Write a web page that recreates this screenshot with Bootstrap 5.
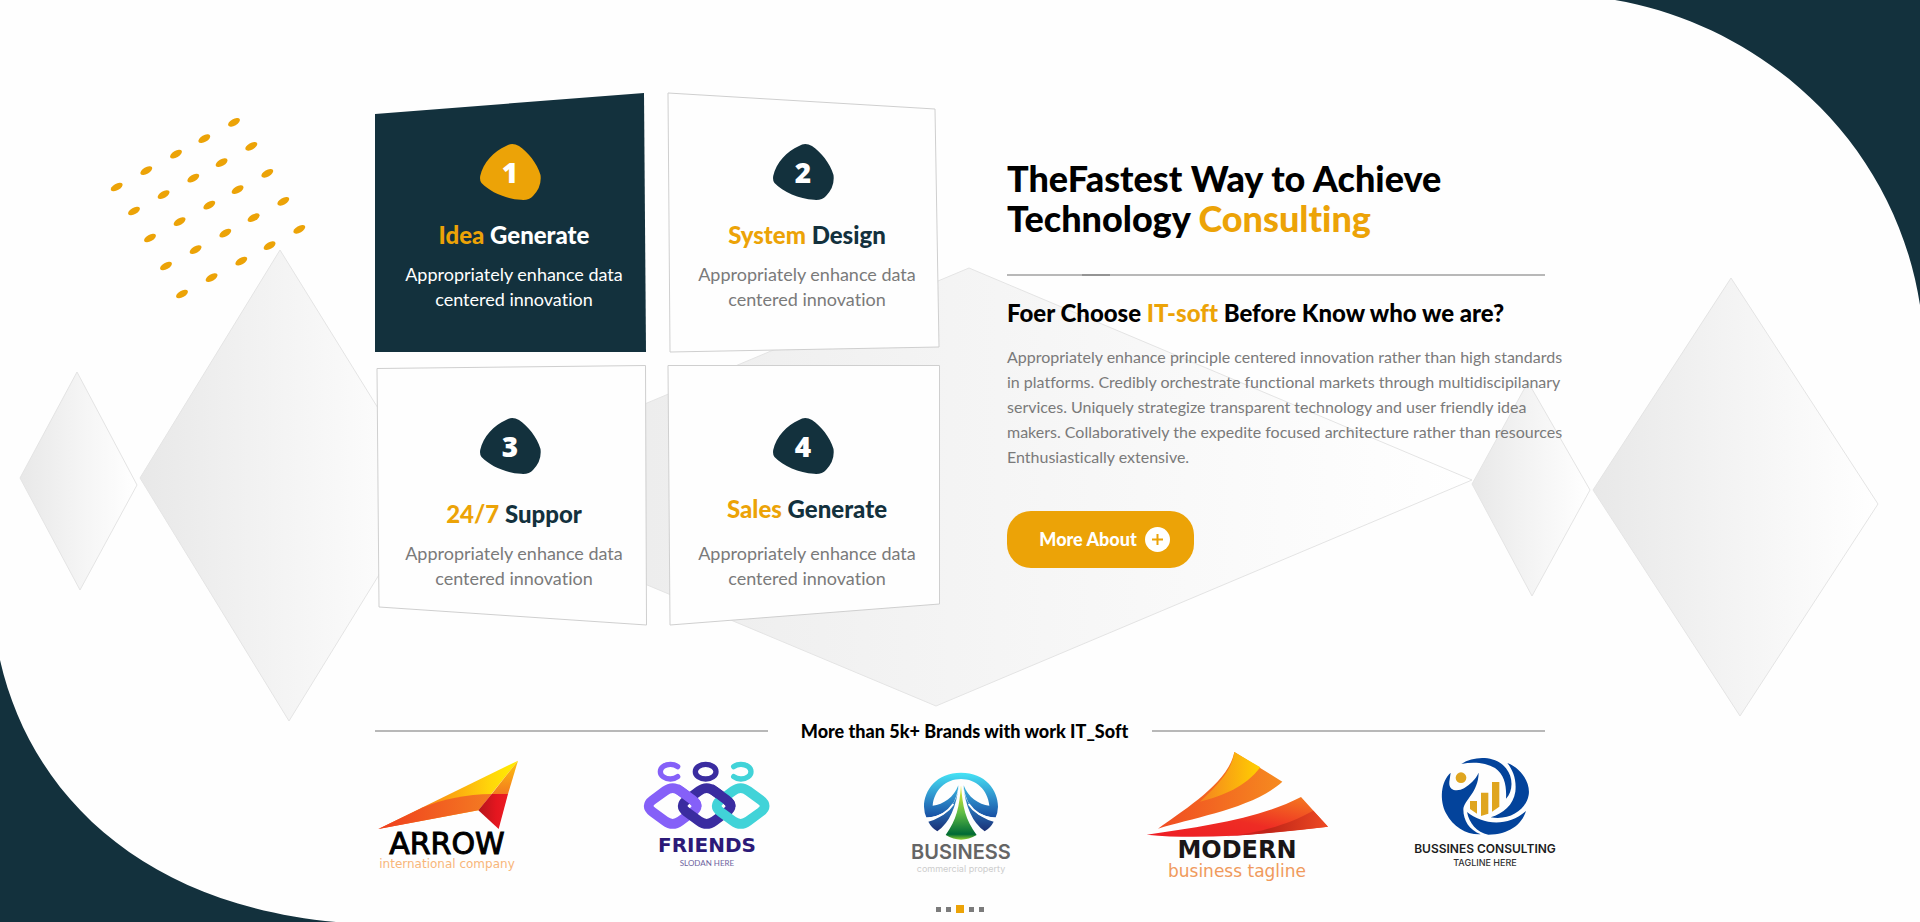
<!DOCTYPE html>
<html lang="en">
<head>
<meta charset="utf-8">
<meta name="viewport" content="width=device-width, initial-scale=1">
<title>IT-soft Technology Consulting</title>
<link rel="stylesheet" href="https://cdn.jsdelivr.net/npm/bootstrap@5.3.0/dist/css/bootstrap.min.css">
<style>
:root{--ink:#13313d;--gold:#eca307;--muted:#7a7a7a}
body{font-family:Lato,"Open Sans",sans-serif;font-variant-ligatures:none;color:#000;background:#fefefe}
.page{position:relative;overflow:hidden;padding-top:92px}
.backdrop{position:absolute;inset:0;width:100%;height:100%;z-index:0}
.wrap{max-width:1170px;width:100%;margin:0 auto;position:relative;z-index:1}
.gold{color:var(--gold)}
.steps{display:grid;grid-template-columns:1fr 1fr;grid-template-rows:260px 262px;column-gap:21px;row-gap:13px;padding-right:20px}
.step{position:relative;text-align:center;padding:52px 0 0 6px;color:var(--muted)}
.step .panel{position:absolute;inset:0;width:100%;height:100%;overflow:visible}
.step .panel polygon{fill:#fefefe;stroke:#cfcfcf;stroke-width:1;stroke-linejoin:round}
.step .body{position:relative}
.step.dark .panel polygon{fill:var(--ink);stroke:none}
.step.dark{color:#fff}
.step.dark h3{color:#fff}
.blob{width:61px;height:56px;position:relative;margin:0 auto;left:-4px;display:flex;align-items:center;justify-content:center;color:#fff;font-family:"Open Sans",sans-serif;font-weight:800;font-size:28px;line-height:36px}
.blob svg{position:absolute;inset:0;fill:var(--ink)}
.step.dark .blob svg{fill:var(--gold)}
.blob span{position:relative}
.step h3{font-size:24px;line-height:28px;font-weight:900;color:var(--ink);margin:21px 0 13px}
.step.low{padding-top:53px}
.step.low h3{margin:26px 0 13px}
.step.low h3.raised{margin:21px 0 18px}
.step p{font-size:18px;line-height:25px;margin:0}
.intro{padding:66px 0 0 47px}
.intro h1{font-size:36px;line-height:40px;font-weight:900;margin:0 0 36px}
.rule{height:2px;background:#b8b8b8;border:0;opacity:1;margin:0}
.rule.accent{background:linear-gradient(90deg,#b8b8b8 75px,#949494 75px,#949494 103px,#b8b8b8 103px)}
.intro h2{font-size:24px;line-height:32px;font-weight:900;margin:21px 0 15px}
.intro p{font-size:16px;line-height:25px;color:var(--muted);margin:0 0 42px}
.btn-more{background:var(--gold);color:#fff;border:0;border-radius:24px;height:57px;width:187px;font-weight:900;font-size:18px;padding:0 8px 0 16px}
.btn-more:hover{background:#d99504;color:#fff}
.brands-title{margin-top:92px}
.brands-title h2{font-size:18px;line-height:24px;font-weight:900;margin:0;padding:0 24px 0 33px}
.logos{margin-top:7px;margin-right:-16px}
.logo{margin:0;text-align:center;display:flex;flex-direction:column;align-items:center}
.logo svg{display:block;height:90px;width:100%}
.logo b,.logo small{white-space:nowrap;display:block}
.lg-arrow{width:182px;align-items:flex-start}.lg-arrow svg{width:144px;height:80px}
.lg-arrow b,.lg-arrow small{width:144px;font-family:"DejaVu Sans",sans-serif}
.lg-arrow b{font-size:30px;line-height:27px;font-weight:400;color:#000;-webkit-text-stroke:1px #000}
.lg-arrow small{font-size:12px;line-height:15px;color:#f8b67a}
.lg-friends{width:140px}.lg-friends b{font:700 20px/24px "DejaVu Sans",sans-serif;color:#2c1a78;margin-top:-7px}
.lg-friends small{font-size:8px;line-height:12px;color:#6d64a0}
.lg-business{width:208px}.lg-business b{font:600 20px/24px Inter,sans-serif;color:#656565}
.lg-business small{font:400 9px/10px Inter,sans-serif;color:#cdcdcd}
.lg-modern{width:184px}.lg-modern b{font:700 24px/21px "DejaVu Sans",sans-serif;color:#1a1617}
.lg-modern small{font:400 17px/20px "DejaVu Sans",sans-serif;color:#f09a5c}
.lg-consult{width:152px}.lg-consult b{font:600 12px/18px Inter,sans-serif;color:#1c1c1c}
.lg-consult small{font:500 9px/10px Inter,sans-serif;color:#333}
.pager{position:relative;z-index:1;gap:5px;margin-bottom:9px}
.pager button{width:5px;height:5px;padding:0;border:0;background:#7b7b7b}
.pager button.active{width:8px;height:8px;background:var(--gold)}
</style>
</head>
<body>
<main class="page min-vh-100 d-flex flex-column">
<svg class="backdrop" viewBox="0 0 1920 922" preserveAspectRatio="xMidYMid slice" aria-hidden="true">
<defs>
<linearGradient id="fade"><stop offset="0" stop-color="#e8e8e8"/><stop offset=".5" stop-color="#f4f4f4"/><stop offset="1" stop-color="#fff"/></linearGradient>
<ellipse id="dot" rx="6.6" ry="3.3" transform="rotate(-30)"/>
<g id="dots"><use href="#dot" x="0"/><use href="#dot" transform="translate(29.6 -16.4)"/><use href="#dot" transform="translate(59.3 -32.9)"/><use href="#dot" transform="translate(87.6 -48.3)"/><use href="#dot" transform="translate(117.3 -64.7)"/></g>
</defs>
<g fill="#13313d"><path d="M0 660C32 800 148 905 336 922H0Z"/><path d="M1615 0C1760 25 1894 138 1920 305V0Z"/></g>
<g fill="url(#fade)" stroke="#e4e4e4" stroke-linejoin="round">
<path d="M20 478 77 372 137 485 80 590Z"/>
<path d="M140 478 280 250 430 492 289 721Z"/>
<path d="M430 494 969 268 1472 480 936 706Z" />
<path d="M1472 484 1528 382 1590 490 1532 596Z"/>
<path d="M1593 490 1731 278 1878 504 1740 716Z"/>
</g>
<g fill="#eca307"><use href="#dots" transform="translate(116.7 187)"/><use href="#dots" transform="translate(134 211)"/><use href="#dots" transform="translate(150 238)"/><use href="#dots" transform="translate(166 266)"/><use href="#dots" transform="translate(182 294)"/></g>
<symbol id="pebble" viewBox="0 0 61 56"><path d="M26 2Q32-2 39 2C48 8 57 19 60.500 31Q62 43 53 52Q49 56.500 41 55.800C26 55 10 48 1.500 39Q-.5 36.500.2 32C3 19 14 7 26 2Z"/></symbol>
</svg>

<div class="wrap">
<div class="row g-0">
<div class="col-lg-6">
<div class="steps">
<article class="step dark">
<svg class="panel" viewBox="0 0 272 260" preserveAspectRatio="none" aria-hidden="true"><polygon points="0,22 269,1 271,260 0,260"/></svg>
<div class="body"><div class="blob"><svg width="61" height="56" aria-hidden="true"><use href="#pebble"/></svg><span>1</span></div>
<h3><span class="gold">Idea</span> Generate</h3><p>Appropriately enhance data<br>centered innovation</p></div>
</article>
<article class="step">
<svg class="panel" viewBox="0 0 272 260" preserveAspectRatio="none" aria-hidden="true"><polygon points="0,1 267,17 271,255 2,260"/></svg>
<div class="body"><div class="blob"><svg width="61" height="56" aria-hidden="true"><use href="#pebble"/></svg><span>2</span></div>
<h3><span class="gold">System</span> Design</h3><p>Appropriately enhance data<br>centered innovation</p></div>
</article>
<article class="step low">
<svg class="panel" viewBox="0 0 272 262" preserveAspectRatio="none" aria-hidden="true"><polygon points="2,3.500 270.500,.5 271.500,260 4,242"/></svg>
<div class="body"><div class="blob"><svg width="61" height="56" aria-hidden="true"><use href="#pebble"/></svg><span>3</span></div>
<h3><span class="gold">24/7</span> Suppor</h3><p>Appropriately enhance data<br>centered innovation</p></div>
</article>
<article class="step low">
<svg class="panel" viewBox="0 0 272 262" preserveAspectRatio="none" aria-hidden="true"><polygon points="0,.5 271.500,.5 271.500,239 2,260"/></svg>
<div class="body"><div class="blob"><svg width="61" height="56" aria-hidden="true"><use href="#pebble"/></svg><span>4</span></div>
<h3 class="raised"><span class="gold">Sales</span> Generate</h3><p>Appropriately enhance data<br>centered innovation</p></div>
</article>
</div>
</div>
<div class="col-lg-6">
<div class="intro">
<h1>TheFastest Way to Achieve<br>Technology <span class="gold">Consulting</span></h1>
<hr class="rule accent">
<h2>Foer Choose <span class="gold">IT-soft</span> Before Know who we are?</h2>
<p class="text-nowrap">Appropriately enhance principle centered innovation rather than high standards<br>in platforms. Credibly orchestrate functional markets through multidiscipilanary<br>services. Uniquely strategize transparent technology and user friendly idea<br>makers. Collaboratively the expedite focused architecture rather than resources<br>Enthusiastically extensive.</p>
<button type="button" class="btn btn-more d-inline-flex align-items-center justify-content-center gap-2">More About
<svg width="25" height="25" viewBox="0 0 25 25" aria-hidden="true"><circle cx="12.500" cy="12.500" r="12.500" fill="#fff"/><path d="M12.500 7V18M7 12.500H18" stroke="#eca307" stroke-width="2"/></svg></button>
</div>
</div>
</div>

<div class="brands-title d-flex align-items-center">
<hr class="rule flex-fill"><h2>More than 5k+ Brands with work IT_Soft</h2><hr class="rule flex-fill">
</div>

<div class="logos d-flex justify-content-between">
<figure class="logo lg-arrow">
<svg viewBox="45 150 432 240" aria-hidden="true"><defs>
<linearGradient id="ar1" x1="0" x2="1"><stop offset="0" stop-color="#f0501f"/><stop offset=".45" stop-color="#fb9a12"/><stop offset=".8" stop-color="#ffd60a"/><stop offset="1" stop-color="#ffee00"/></linearGradient>
<linearGradient id="ar2" x1="0" x2="1"><stop offset="0" stop-color="#ef3e1e"/><stop offset="1" stop-color="#f47c22"/></linearGradient>
<linearGradient id="ar3" x1="0" x2="1"><stop offset="0" stop-color="#b5151b"/><stop offset=".6" stop-color="#e4161f"/><stop offset="1" stop-color="#ec1c24"/></linearGradient>
<linearGradient id="ar4" x1="0" y1="1" x2="0" y2="0"><stop offset="0" stop-color="#f37a1f"/><stop offset="1" stop-color="#fdc40c"/></linearGradient></defs>
<path fill="url(#ar1)" d="M55 387 474 182 355 331Z"/><path fill="url(#ar2)" d="M55 387 190 322Q280 284 395 282L355 331Z"/><path fill="url(#ar3)" d="M355 331 395 282H444L416 387Z"/><path fill="url(#ar4)" d="M395 282 474 182 444 282Z"/></svg>
<b>ARROW</b><small>international company</small>
</figure>
<figure class="logo lg-friends">
<svg viewBox="831 150 420 270" aria-hidden="true"><defs>
<path id="ring" d="M915 273Q938 256 961 273L998 300Q1022 318 998 336L961 363Q938 380 915 363L878 336Q854 318 878 300Z"/>
<path id="ringover" d="M950 266Q956 269 961 273L998 300Q1010 309 1010 320"/></defs>
<g fill="none">
<g stroke-width="16" stroke-linecap="round"><path stroke="#8560f8" d="M953 200A30 22 0 1 0 953 230"/><ellipse stroke="#3a2ca0" cx="1037" cy="215" rx="31" ry="22"/><path stroke="#41d3d8" d="M1121 200A30 22 0 1 1 1121 230"/></g>
<g stroke-width="29">
<use href="#ring" stroke="#8560f8"/>
<use href="#ring" stroke="#3a2ca0" x="102"/>
<use href="#ring" stroke="#41d3d8" x="204"/>
<use href="#ringover" stroke="#8560f8"/>
<use href="#ringover" stroke="#3a2ca0" x="102"/></g></g></svg>
<b>FRIENDS</b><small>SLODAN HERE</small>
</figure>
<figure class="logo lg-business">
<svg viewBox="231 150 624 270" aria-hidden="true"><defs>
<linearGradient id="bu1" x1="0" x2="0" y1="0" y2="1"><stop offset="0" stop-color="#45e4f5"/><stop offset=".55" stop-color="#2f8fcb"/><stop offset="1" stop-color="#174fa3"/></linearGradient>
<linearGradient id="bu2" x1="0" x2="0" y1="0" y2="1"><stop offset="0" stop-color="#3aaee0"/><stop offset=".6" stop-color="#2465ad"/><stop offset="1" stop-color="#1a2f74"/></linearGradient>
<linearGradient id="bu3" x1="0" x2="0" y1="0" y2="1"><stop offset="0" stop-color="#f3ee2f"/><stop offset=".5" stop-color="#5fbd45"/><stop offset=".9" stop-color="#006a35"/><stop offset="1" stop-color="#8ed02f"/></linearGradient>
<g id="wing"><path fill="url(#bu1)" d="M543 218C470 218 432 270 432 320Q433 340 439 352Q500 348 522 305Q534 280 535 256C522 292 490 314 458 317C462 270 498 237 543 237Z"/><path fill="url(#bu2)" d="M535 256C536 290 515 330 480 350Q464 360 445 365Q454 383 472 394Q500 374 515 340Q533 300 535 256Z"/></g></defs>
<use href="#wing"/><use href="#wing" transform="matrix(-1 0 0 1 1086 0)"/>
<path fill="none" stroke="#fefefe" stroke-width="6" d="M442 358Q495 350 520 312M644 358Q591 350 566 312"/>
<path fill="url(#bu3)" d="M543 256C538 320 530 360 497 405Q543 433 590 405C556 360 548 320 543 256Z"/></svg>
<b>BUSINESS</b><small>commercial property</small>
</figure>
<figure class="logo lg-modern">
<svg viewBox="75 150 552 270" aria-hidden="true"><defs>
<linearGradient id="mo1" x1="0" x2="1"><stop offset="0" stop-color="#f04b23"/><stop offset="1" stop-color="#f68b1f"/></linearGradient>
<linearGradient id="mo2" x1="0" x2="1"><stop offset="0" stop-color="#f58220"/><stop offset="1" stop-color="#ffd000"/></linearGradient>
<linearGradient id="mo3" x1="0" y1="1" x2="1" y2="0"><stop offset="0" stop-color="#ee1c25"/><stop offset=".45" stop-color="#ee2c24"/><stop offset="1" stop-color="#f58220"/></linearGradient>
<linearGradient id="mo4" x1="0" x2="1"><stop offset="0" stop-color="#e51f25"/><stop offset=".4" stop-color="#bf2418"/><stop offset="1" stop-color="#ee4a23"/></linearGradient></defs>
<path fill="url(#mo1)" d="M114 386C190 330 325 250 343 156L487 245C400 325 220 352 114 386Z"/>
<path fill="url(#mo2)" d="M240 305C310 240 335 205 343 156L421 202C375 262 310 287 240 305Z"/>
<path fill="url(#mo3)" d="M80 404C250 380 420 355 543 291L624 380C460 396 270 423 80 404Z"/>
<path fill="url(#mo4)" d="M320 409C430 395 500 375 580 332L624 380Q480 398 320 409Z"/></svg>
<b>MODERN</b><small>business tagline</small>
</figure>
<figure class="logo lg-consult">
<svg viewBox="867 150 456 270" aria-hidden="true"><g fill="#03439b">
<path d="M992 218C962 245 958 300 978 340C1000 382 1040 405 1082 403C1048 390 1030 362 1030 328C1032 300 1075 278 1076 218C1066 240 1050 252 1032 265C1015 275 985 275 988 245Z"/>
<path d="M1024 192C1065 165 1130 168 1158 205C1182 235 1178 275 1158 296C1160 260 1155 225 1125 204C1098 188 1060 184 1024 192Z"/>
<path d="M1162 189C1205 205 1232 250 1226 285C1218 330 1170 362 1112 352C1150 340 1180 315 1186 275C1190 240 1180 212 1162 189Z"/>
<path d="M1041 336C1085 372 1160 384 1218 333C1205 375 1165 404 1105 404C1070 398 1048 370 1041 336Z"/></g>
<g fill="#dfa51f"><ellipse cx="1023" cy="233" rx="16" ry="16"/><path d="M1050 303H1071V341L1050 327ZM1083 278H1105V341L1083 348ZM1116 246H1138V320L1116 335Z"/></g></svg>
<b>BUSSINES CONSULTING</b><small>TAGLINE HERE</small>
</figure>
</div>
</div>

<nav class="pager d-flex justify-content-center align-items-center mt-auto" aria-label="Slides">
<button type="button" aria-label="Slide 1"></button><button type="button" aria-label="Slide 2"></button><button type="button" class="active" aria-label="Slide 3" aria-current="true"></button><button type="button" aria-label="Slide 4"></button><button type="button" aria-label="Slide 5"></button>
</nav>
</main>
<script src="https://cdn.jsdelivr.net/npm/bootstrap@5.3.0/dist/js/bootstrap.bundle.min.js"></script>
</body>
</html>
